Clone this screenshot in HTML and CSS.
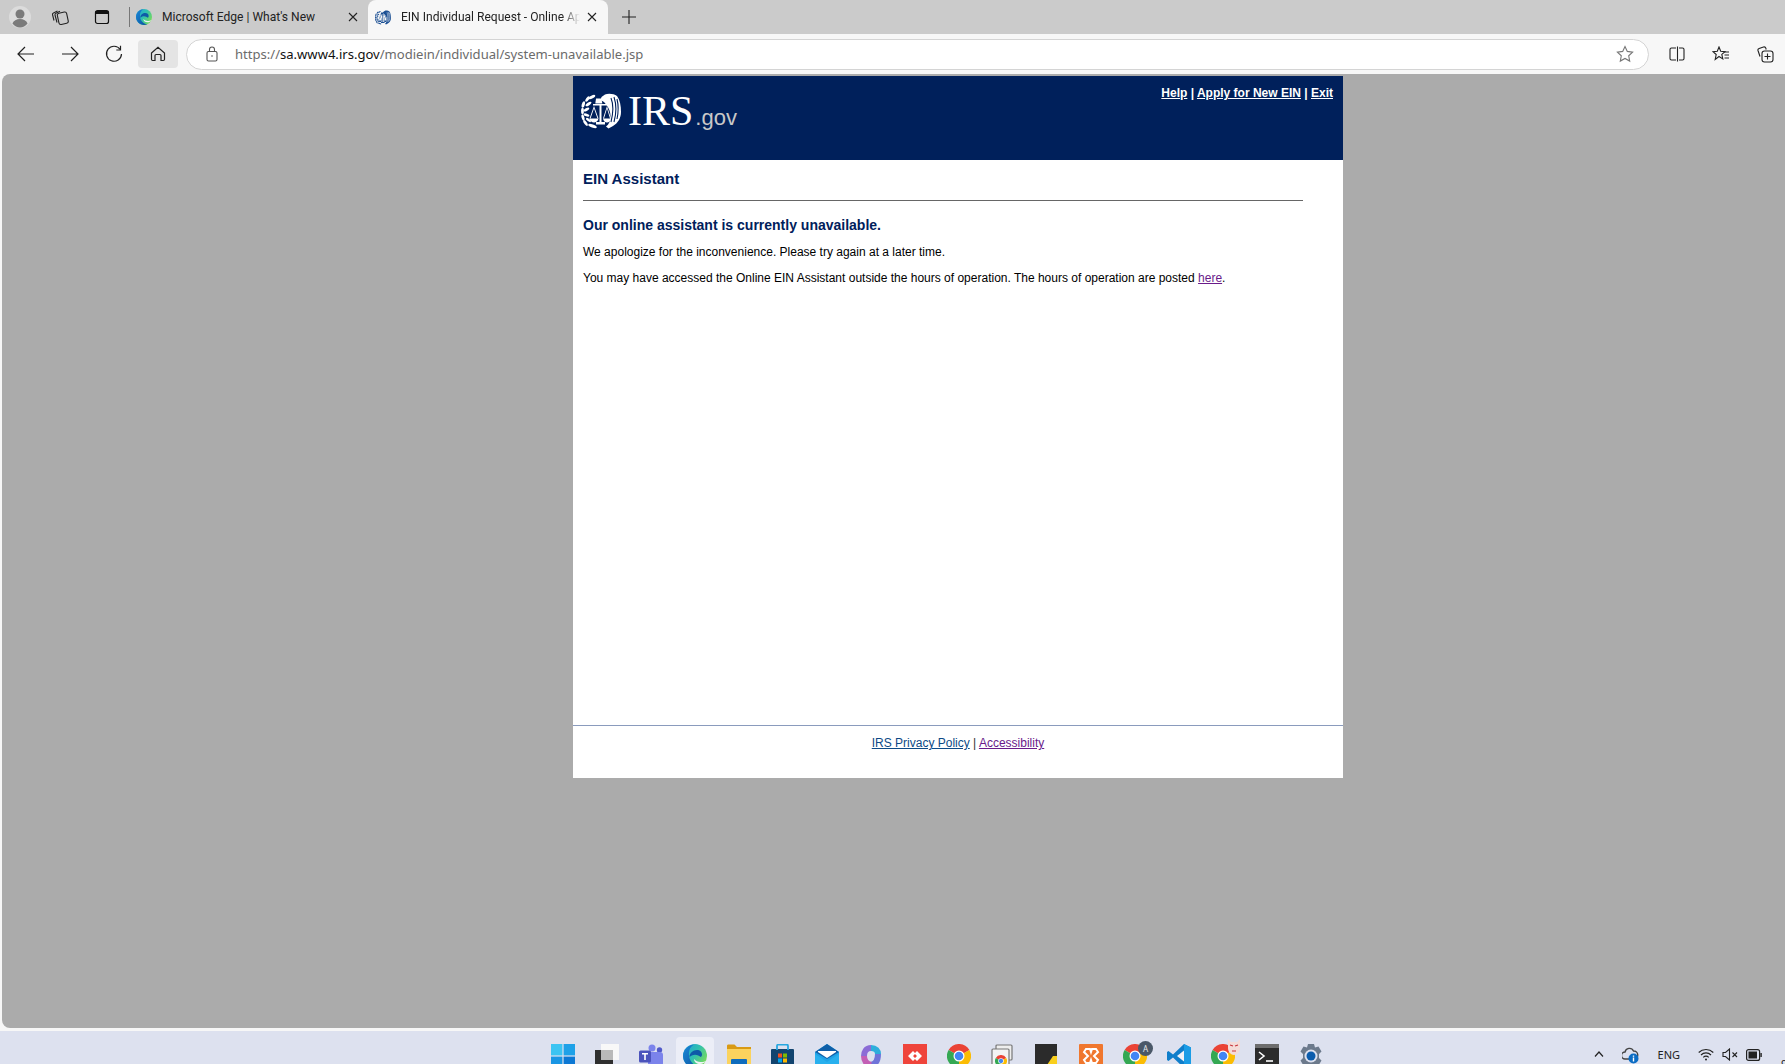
FILE: index.html
```html
<!DOCTYPE html>
<html lang="en">
<head>
<meta charset="utf-8">
<title>EIN Individual Request - Online Application</title>
<link rel="stylesheet" href="styles.css">
</head>
<body>
<svg class="defs" width="0" height="0" aria-hidden="true">
  <defs>
    <symbol id="seal" viewBox="0 0 40 36">
      <g fill="currentColor">
        <ellipse cx="11" cy="4" rx="3.600" ry="1.500" transform="rotate(-30 11 4)"/>
        <ellipse cx="6.500" cy="6" rx="1.500" ry="3.200" transform="rotate(35 6.500 6)"/>
        <ellipse cx="7.500" cy="11" rx="3.400" ry="1.400" transform="rotate(-35 7.500 11)"/>
        <ellipse cx="2.300" cy="11.500" rx="1.500" ry="3.400" transform="rotate(15 2.300 11.500)"/>
        <ellipse cx="5.500" cy="16.500" rx="3.200" ry="1.400" transform="rotate(-30 5.500 16.500)"/>
        <ellipse cx="1.500" cy="18" rx="1.400" ry="3.200"/>
        <ellipse cx="5.500" cy="22" rx="3" ry="1.400" transform="rotate(15 5.500 22)"/>
        <ellipse cx="2" cy="24.500" rx="1.400" ry="3.200" transform="rotate(-15 2 24.500)"/>
        <ellipse cx="7.500" cy="27" rx="3" ry="1.300" transform="rotate(35 7.500 27)"/>
        <ellipse cx="4.500" cy="30" rx="1.400" ry="3.400" transform="rotate(-35 4.500 30)"/>
        <ellipse cx="11.500" cy="33" rx="4.500" ry="1.500" transform="rotate(20 11.500 33)"/>
        <path d="M24 1.500C27 0 33 .5 36 3c3 4 4 10 4 16 0 6-3 11-8 14l-4.500 2.500-2.500-2c3-2 4.500-6 4.500-10.500 0-4-1.500-8-4-11l-2.500-3L19.500 7l1-3z"/>
        <path d="M12 11h15v1.400H12z"/>
        <path d="M15 5.500h5.500l.8 5h-7z"/>
        <path d="M18.500 12h2v17h3.500v2.500h-9V29h3.500z"/>
        <path d="M8.500 25.500h9c-.5 2.500-2.500 4-4.500 4s-4-1.500-4.500-4zM22 25.500h8c-.5 2.500-2 4-4 4s-3.500-1.500-4-4z"/>
        <path d="M13 13l-4.500 12.500h1L13 15.500l3.500 10h1zM26 13l-4 12.500h1l3-10 3 10h1z"/>
      </g>
      <g stroke="var(--seal-bg)" stroke-width="1.100" fill="none">
        <path d="M30 5c2 5 2.500 14 0 24M33 4c2 6 2.500 16 0 25M36 6c1.500 6 1.500 13 0 20"/>
      </g>
    </symbol>
    <linearGradient id="edgeA" x1="0" y1="0" x2="1" y2=".6">
      <stop offset="0" stop-color="#1f9fdc"/><stop offset=".55" stop-color="#2fc0b0"/><stop offset="1" stop-color="#74d95f"/>
    </linearGradient>
    <linearGradient id="edgeB" x1="0" y1="0" x2="1" y2="1">
      <stop offset="0" stop-color="#1a8ad8"/><stop offset="1" stop-color="#0b4f9e"/>
    </linearGradient>
    <symbol id="edge" viewBox="0 0 24 24">
      <circle cx="12" cy="12" r="12" fill="url(#edgeA)"/>
      <path d="M0 12C0 6 5 1 11 .5 7 2.500 5.500 7 6 11.500c.5 6 5 10.500 11 11.300-1.500.8-3.300 1.200-5 1.200C5 24 0 18 0 12z" fill="url(#edgeB)"/>
      <path d="M6.500 13C6.500 9 10 6 14 6c3 0 5 2 5 4.500 0 1-.4 2-1.200 2.600-1.500-1.300-3.300-2.400-5.800-2.400-2.300 0-4.300 1-5.500 2.300z" fill="#0e5aa8"/>
      <path d="M11 15c0 3 3 5 6 5 2.500 0 5-1.300 6.500-3.500-2 1.300-4 1.700-6 1.500-2.500-.2-5-1-6.500-3z" fill="#eef3f4"/>
    </symbol>
    <symbol id="chrome" viewBox="0 0 24 24">
      <path d="M12 12L1.600 6A12 12 0 0 1 22.400 6z" fill="#ea4335"/>
      <path d="M12 12L22.400 6A12 12 0 0 1 12 24z" fill="#fbbc04"/>
      <path d="M12 12L12 24A12 12 0 0 1 1.600 6z" fill="#34a853"/>
      <circle cx="12" cy="12" r="5.500" fill="#fff"/>
      <circle cx="12" cy="12" r="4.300" fill="#4285f4"/>
    </symbol>
  </defs>
</svg>

<header class="tabstrip">
  <div class="strip-btn strip-btn-avatar">
    <svg viewBox="0 0 22 22" width="22" height="22"><circle cx="11" cy="11" r="11" fill="#dcdcdc"/><circle cx="11" cy="8" r="4.500" fill="#7b7b7b"/><path d="M3.500 17.500c1-3 4-4.500 7.500-4.500s6.500 1.500 7.500 4.500c-2 2.500-4.700 4-7.500 4s-5.500-1.500-7.500-4z" fill="#7b7b7b"/></svg>
  </div>
  <div class="strip-btn strip-btn-collections">
    <svg viewBox="0 0 18 18" width="18" height="18" fill="none" stroke="#222" stroke-width="1.100"><path d="M3 12.500L1.500 6.500c-.2-.8.200-1.300.9-1.600L6.500 3"/><path d="M6 14.500L4 7c-.2-.8.100-1.400.9-1.700L9 3.200"/><rect x="7" y="4.500" width="9.500" height="11.500" rx="2" transform="rotate(-12 11.700 10)"/></svg>
  </div>
  <div class="strip-btn strip-btn-tabs">
    <svg viewBox="0 0 16 16" width="16" height="16" fill="none" stroke="#111" stroke-width="1.200"><rect x="1.500" y="1.500" width="13" height="13" rx="2"/><path d="M1.500 3.500h13" stroke-width="3"/></svg>
  </div>
  <span class="strip-sep"></span>
  <div class="tab">
    <svg class="tab-icon" width="16" height="16"><use href="#edge"/></svg>
    <span class="tab-title">Microsoft Edge | What's New</span>
    <svg class="tab-close" viewBox="0 0 10 10" width="10" height="10"><path d="M1 1l8 8M9 1l-8 8" stroke="#222" stroke-width="1.100"/></svg>
  </div>
  <div class="tab tab-active">
    <svg class="tab-icon favicon" width="16" height="15"><use href="#seal"/></svg>
    <span class="tab-title tab-title-fade">EIN Individual Request - Online Application</span>
    <svg class="tab-close" viewBox="0 0 10 10" width="10" height="10"><path d="M1 1l8 8M9 1l-8 8" stroke="#222" stroke-width="1.100"/></svg>
  </div>
  <svg class="new-tab" viewBox="0 0 14 14" width="14" height="14"><path d="M7 0v14M0 7h14" stroke="#222" stroke-width="1.100"/></svg>
</header>

<nav class="toolbar">
  <div class="nav-btn">
    <svg viewBox="0 0 18 16" width="18" height="16" fill="none" stroke="#222" stroke-width="1.200"><path d="M17 8H1M8 1L1 8l7 7"/></svg>
  </div>
  <div class="nav-btn">
    <svg viewBox="0 0 18 16" width="18" height="16" fill="none" stroke="#222" stroke-width="1.200"><path d="M1 8h16M10 1l7 7-7 7"/></svg>
  </div>
  <div class="nav-btn">
    <svg viewBox="0 0 18 18" width="18" height="18" fill="none" stroke="#222" stroke-width="1.200"><path d="M15.200 4.500A7.500 7.500 0 1 0 16.500 9"/><path d="M15.500 0.800v4.200h-4.200"/></svg>
  </div>
  <div class="nav-btn nav-btn-home">
    <svg viewBox="0 0 16 16" width="16" height="16" fill="none" stroke="#222" stroke-width="1.200"><path d="M1.500 7L8 1.200 14.500 7v6.300c0 .7-.5 1.200-1.200 1.200h-2.300v-5c0-.6-.4-1-1-1H6c-.6 0-1 .4-1 1v5H2.700c-.7 0-1.200-.5-1.200-1.200z"/></svg>
  </div>
  <div class="address">
    <svg class="lock" viewBox="0 0 12 16" width="12" height="16" fill="none" stroke="#555" stroke-width="1.100"><rect x="1" y="5.500" width="10" height="9.500" rx="1.500"/><path d="M3.500 5.500V3.500a2.500 2.500 0 0 1 5 0v2"/><circle cx="6" cy="10" r=".8" fill="#555" stroke="none"/></svg>
    <span class="url"><span class="url-dim">https://</span><span class="url-host">sa.www4.irs.gov</span><span class="url-dim">/modiein/individual/system-unavailable.jsp</span></span>
    <svg class="star" viewBox="0 0 18 18" width="18" height="18" fill="none" stroke="#777" stroke-width="1.100"><path d="M9 1.500l2.300 4.900 5.300.7-3.900 3.700 1 5.300L9 13.500l-4.700 2.600 1-5.300L1.400 7.100l5.300-.7z"/></svg>
  </div>
  <div class="tools">
    <div class="tool-btn">
      <svg viewBox="0 0 16 16" width="16" height="16" fill="none" stroke="#222" stroke-width="1.100"><path d="M7 2H2.500C1.700 2 1 2.700 1 3.500v9c0 .8.700 1.500 1.500 1.500H7M8.500 .5v15M10 2h3.500c.8 0 1.500.7 1.500 1.500v9c0 .8-.7 1.500-1.500 1.500H10"/></svg>
    </div>
    <div class="tool-btn">
      <svg viewBox="0 0 18 16" width="18" height="16" fill="none" stroke="#222" stroke-width="1.100"><path d="M7 1l1.700 4.200 4.300.4-3.200 2.800 1 4.500L7 10.500l-3.800 3 1-5L1 5.600l4.300-.4z"/><path d="M12 6h5M12.500 9h4.500M12.500 12h4.500"/></svg>
    </div>
    <div class="tool-btn">
      <svg viewBox="0 0 17 17" width="17" height="17" fill="none" stroke="#222" stroke-width="1.100"><path d="M3 10.500L1 4.500C.7 3.500 1.200 2.700 2.100 2.400L6.500 1c1-.3 2 .2 2.300 1.200l.4 1.300"/><rect x="5" y="5" width="11" height="11" rx="2.500"/><path d="M10.500 7.500v6M7.500 10.500h6"/></svg>
    </div>
  </div>
</nav>

<main class="viewport">
  <div class="page">
    <div class="banner">
      <div class="logo">
        <svg class="logo-seal" width="40" height="36"><use href="#seal"/></svg>
        <span class="logo-irs">IRS</span><span class="logo-gov">.gov</span>
      </div>
      <div class="banner-links"><a href="#">Help</a> | <a href="#">Apply for New EIN</a> | <a href="#">Exit</a></div>
    </div>
    <div class="content">
      <h1 class="app-title">EIN Assistant</h1>
      <hr class="title-rule">
      <h2 class="notice">Our online assistant is currently unavailable.</h2>
      <p class="body-text">We apologize for the inconvenience. Please try again at a later time.</p>
      <p class="body-text">You may have accessed the Online EIN Assistant outside the hours of operation. The hours of operation are posted <a class="visited" href="#">here</a>.</p>
    </div>
    <footer class="page-footer">
      <a class="policy" href="#">IRS Privacy Policy</a> | <a class="visited" href="#">Accessibility</a>
    </footer>
  </div>
</main>

<footer class="taskbar">
  <div class="apps">
    <div class="app"><svg viewBox="0 0 24 24" width="24" height="24"><rect width="11.400" height="11.400" fill="#3cc4f2"/><rect x="12.600" width="11.400" height="11.400" fill="#1ea1e8"/><rect y="12.600" width="11.400" height="11.400" fill="#1a96e4"/><rect x="12.600" y="12.600" width="11.400" height="11.400" fill="#0c78d4"/></svg></div>
    <div class="app"><svg viewBox="0 0 24 24" width="24" height="24"><rect x="0" y="6" width="18" height="18" fill="#2f2f2f"/><rect x="6" y="0" width="18" height="16" fill="#f8f8f8"/><rect x="6" y="6" width="12" height="10" fill="#b9b9b9"/></svg></div>
    <div class="app"><svg viewBox="0 0 24 24" width="24" height="24"><circle cx="13" cy="4" r="3.500" fill="#7b83eb"/><circle cx="20.500" cy="6" r="2.700" fill="#5059c9"/><rect x="9" y="8" width="15" height="14" rx="3" fill="#7b83eb"/><rect x="0" y="6.500" width="12" height="12" rx="1.500" fill="#4b53bc"/><path d="M3 9h6v1.500H6.800V16H5.200v-5.500H3z" fill="#fff"/></svg></div>
    <div class="app app-active"><svg width="24" height="24"><use href="#edge"/></svg></div>
    <div class="app"><svg viewBox="0 0 24 24" width="24" height="24"><path d="M0 2C0 1 .5.500 1.500.500h6L10 3h14v21H0z" fill="#d99a14"/><rect y="5" width="24" height="19" fill="#fbd35e"/><rect x="4" y="15" width="16" height="9" rx="1" fill="#0f6cbd"/></svg></div>
    <div class="app"><svg viewBox="0 0 24 24" width="24" height="24"><rect y="5" width="23" height="19" rx="1" fill="#12446f"/><path d="M6 6V2c0-1 .5-1.500 1.500-1.500h8c1 0 1.500.5 1.500 1.500v4" fill="none" stroke="#27a7e0" stroke-width="1.800"/><rect x="7" y="9.500" width="4" height="4" fill="#f25022"/><rect x="12" y="9.500" width="4" height="4" fill="#7fba00"/><rect x="7" y="14.500" width="4" height="4" fill="#00a4ef"/><rect x="12" y="14.500" width="4" height="4" fill="#ffb900"/></svg></div>
    <div class="app"><svg viewBox="0 0 24 24" width="24" height="24"><path d="M0 8L12 0l12 8v16H0z" fill="#1fa3e6"/><path d="M0 8L12 0l12 8-12 7z" fill="#0f5fa8"/><path d="M3 7h18v1l-9 6-9-6z" fill="#fff"/><path d="M0 10l12 8 12-8v14H0z" fill="#28b0ee"/></svg></div>
    <div class="app"><svg viewBox="0 0 24 24" width="24" height="24" fill="none" stroke-width="6"><path d="M12 4C7 4 5 8 5 12" stroke="#8b6cd6"/><path d="M12 4c5 0 7 3 7 6" stroke="#2eaedb"/><path d="M19 10c0 6-2 10-7 11" stroke="#6f74d9"/><path d="M5 12c0 5 3 8 7 9" stroke="#c35fb5"/></svg></div>
    <div class="app"><svg viewBox="0 0 24 24" width="24" height="24"><rect width="24" height="24" fill="#ef443b"/><path d="M10 7l-5 5 5 5 2.500-2.500L10 12l2.500-2.500z" fill="#fff"/><path d="M14 7l5 5-5 5-2.500-2.500L14 12l-2.500-2.500z" fill="#fff"/></svg></div>
    <div class="app"><svg width="24" height="24"><use href="#chrome"/></svg></div>
    <div class="app"><svg viewBox="0 0 22 24" width="22" height="24"><rect x="5" y="1" width="16" height="15" rx="1" fill="#eee" stroke="#777" stroke-width="1.200"/><rect x="1" y="5" width="17" height="19" rx="1" fill="#f4f4f4" stroke="#777" stroke-width="1.200"/><svg x="4" y="11" width="12" height="12"><use href="#chrome"/></svg></svg></div>
    <div class="app"><svg viewBox="0 0 22 24" width="22" height="24"><rect width="22" height="24" fill="#2b2b2b"/><path d="M10 24l8-12h4v12z" fill="#f9cf1c"/></svg></div>
    <div class="app"><svg viewBox="0 0 24 24" width="24" height="24"><rect width="24" height="24" rx="1" fill="#f0772e"/><path d="M7 5h4l1 3 1-3h4l2 3-4 4 4 4-2 3h-4l-1-3-1 3H7l-2-3 4-4-4-4z" fill="none" stroke="#fff" stroke-width="2"/></svg></div>
    <div class="app app-badged"><svg width="24" height="24"><use href="#chrome"/></svg><span class="badge">A</span></div>
    <div class="app"><svg viewBox="0 0 24 24" width="24" height="24"><path d="M17 0l7 3.500v17L17 24 6 13.500 1.500 17 0 16V8l1.500-1L6 10.500z" fill="#0f7ecb"/><path d="M17 6.500L10 12l7 5.500z" fill="#f0f2f8"/><path d="M17 0l7 3.500v17L17 24z" fill="#1a9ce6"/></svg></div>
    <div class="app app-badged"><svg width="24" height="24"><use href="#chrome"/></svg><svg class="fox" viewBox="0 0 14 16" width="14" height="16"><path d="M1 0l3 3h6l3-3v9c0 4-3 7-6 7s-6-3-6-7z" fill="#f4dcd8"/><path d="M3 6l3 1M11 6L8 7M5 12h4" stroke="#c9353b" stroke-width="1.200"/></svg></div>
    <div class="app"><svg viewBox="0 0 24 24" width="24" height="24"><rect width="24" height="24" rx="1" fill="#2c2c2c"/><rect width="24" height="4" fill="#6d6d6d"/><path d="M4 8l5 4-5 4" fill="none" stroke="#fff" stroke-width="1.600"/><path d="M11 17h7" stroke="#fff" stroke-width="1.600"/></svg></div>
    <div class="app"><svg viewBox="0 0 24 24" width="24" height="24"><path d="M9 0h6l1 3.500 3.500-1 3 5-2.500 2.500v4l2.500 2.500-3 5-3.500-1L15 24H9l-1-3.500-3.500 1-3-5L4 14v-4L1.500 7.500l3-5 3.500 1z" fill="#6c7a8c"/><circle cx="12" cy="12" r="6.500" fill="#dde1ef"/><circle cx="12" cy="12" r="4.500" fill="#0b5cad"/></svg></div>
  </div>
  <div class="tray">
    <svg class="tray-chev" viewBox="0 0 10 6" width="10" height="6" fill="none" stroke="#222" stroke-width="1.200"><path d="M1 5.500l4-4.500 4 4.500"/></svg>
    <svg class="tray-cloud" viewBox="0 0 17 18" width="17" height="18"><path d="M3 13a3.500 3.500 0 0 1 0-7 4.500 4.500 0 0 1 8.500-1A4 4 0 0 1 12 13z" fill="#dde1ef" stroke="#444" stroke-width="1.400"/><circle cx="11.500" cy="12.500" r="5" fill="#0b6cc4"/><rect x="10.800" y="11.500" width="1.400" height="4" fill="#fff"/><rect x="10.800" y="9.500" width="1.400" height="1.300" fill="#fff"/></svg>
    <span class="tray-lang">ENG</span>
    <svg class="tray-wifi" viewBox="0 0 16 13" width="16" height="13" fill="none" stroke="#222" stroke-width="1.100"><path d="M.7 4.500a10.500 10.500 0 0 1 14.600 0M3 7a7 7 0 0 1 10 0M5.300 9.300a3.800 3.800 0 0 1 5.400 0"/><circle cx="8" cy="11.500" r="1" fill="#222" stroke="none"/></svg>
    <svg class="tray-vol" viewBox="0 0 16 13" width="16" height="13" fill="none" stroke="#222" stroke-width="1.100"><path d="M1 4.500h2.500L7.500 1v11l-4-3.500H1z"/><path d="M10.500 4.500l4.500 4.500M15 4.500l-4.500 4.500"/></svg>
    <svg class="tray-batt" viewBox="0 0 16 12" width="16" height="12"><rect x=".6" y=".6" width="13" height="10.800" rx="2" fill="none" stroke="#222" stroke-width="1.200"/><rect x="2.500" y="2.500" width="8.500" height="7" fill="#222"/><rect x="14.400" y="4" width="1.400" height="4" fill="#222"/></svg>
    <span class="tray-clock">9</span>
  </div>
</footer>
</body>
</html>
```

FILE: styles.css
```css
* {
  box-sizing: border-box;
}

html,
body {
  height: 100%;
}

body {
  margin: 0;
  display: flex;
  flex-direction: column;
  overflow: hidden;
  background: #f7f7f7;
  font-family: "Noto Sans", "Open Sans", sans-serif;
  color: #222;
}

.defs {
  position: absolute;
}

/* tab strip */
.tabstrip {
  height: 34px;
  flex: none;
  display: flex;
  align-items: center;
  background: #cbcbcb;
}

.strip-btn {
  width: 40px;
  height: 34px;
  flex: none;
  display: flex;
  align-items: center;
  justify-content: center;
}

.strip-btn-tabs {
  width: 44px;
}

.strip-sep {
  width: 1px;
  height: 20px;
  margin-left: 5px;
  background: #777;
  flex: none;
}

.tab {
  height: 34px;
  flex: none;
  display: flex;
  align-items: center;
  width: 238px;
  padding-left: 6px;
  font-family: Roboto, "Noto Sans", sans-serif;
  font-size: 12.05px;
  color: #222;
}

.tab-icon {
  flex: none;
}

.tab-title {
  margin-left: 10px;
  flex: 1;
  min-width: 0;
  white-space: nowrap;
  overflow: hidden;
}

.tab-close {
  flex: none;
  margin: 0 10px 0 10px;
}

.tab-active {
  width: 240px;
  padding-left: 7px;
  background: #f7f7f7;
  border-radius: 8px 8px 0 0;
}

.tab-active .tab-close {
  margin: 0 11px 0 7px;
}

.tab-title-fade {
  -webkit-mask-image: linear-gradient(to right, #000 90%, transparent);
  mask-image: linear-gradient(to right, #000 90%, transparent);
}

.favicon {
  color: #1b4f93;
  --seal-bg: #f7f7f7;
}

.new-tab {
  flex: none;
  margin-left: 14px;
}

/* toolbar */
.toolbar {
  height: 40px;
  flex: none;
  display: flex;
  align-items: center;
  padding-left: 6px;
  background: #f7f7f7;
}

.nav-btn {
  width: 40px;
  height: 28px;
  margin-right: 4px;
  flex: none;
  display: flex;
  align-items: center;
  justify-content: center;
}

.nav-btn-home {
  background: #e4e4e4;
  border-radius: 4px;
  margin-right: 8px;
}

.address {
  width: 1463px;
  height: 31px;
  flex: none;
  display: flex;
  align-items: center;
  padding: 0 14px 0 19px;
  background: #fff;
  border: 1px solid #d4d4d4;
  border-radius: 16px;
}

.lock {
  flex: none;
}

.url {
  margin-left: 17px;
  flex: 1;
  font-size: 13.07px;
  white-space: nowrap;
}

.url-dim {
  color: #6b6b6b;
}

.url-host {
  color: #111;
}

.star {
  flex: none;
}

.tools {
  display: flex;
  margin-left: 6px;
  flex: none;
}

.tool-btn {
  width: 44px;
  height: 28px;
  flex: none;
  display: flex;
  align-items: center;
  justify-content: center;
}

/* web page */
.viewport {
  flex: 1;
  min-height: 0;
  margin: 0 0 3px 2px;
  padding: 2px 0 0 571px;
  background: #ababab;
  border-radius: 8px 0 0 8px;
  overflow: hidden;
}

.page {
  width: 770px;
  height: 702px;
  display: flex;
  flex-direction: column;
  background: #fff;
  font-family: "Liberation Sans", Arial, sans-serif;
  font-size: 12px;
  color: #000;
}

.banner {
  height: 84px;
  flex: none;
  display: flex;
  justify-content: space-between;
  padding: 10px 10px 0 8px;
  background: #00205b;
  --seal-bg: #00205b;
}

.logo {
  display: flex;
  align-items: flex-start;
  color: #fff;
}

.logo-seal {
  flex: none;
  margin-top: 7px;
}

.logo-irs {
  margin: 1px 0 0 7px;
  font-family: "Liberation Serif", "Times New Roman", serif;
  font-size: 42px;
  line-height: 48px;
}

.logo-gov {
  margin: 17px 0 0 2px;
  font-size: 22px;
  line-height: 30px;
  color: #c8c8c8;
}

.banner-links {
  font-weight: bold;
  line-height: 14px;
  color: #fff;
}

.banner-links a {
  color: #fff;
}

.content {
  flex: 1;
  padding: 11px 0 0 10px;
}

.app-title {
  margin: 0;
  font-size: 15px;
  line-height: 16px;
  font-weight: bold;
  color: #00205b;
}

.title-rule {
  width: 720px;
  height: 1px;
  margin: 13px 0 0;
  border: 0;
  background: #666;
}

.notice {
  margin: 16px 0 0;
  font-size: 14px;
  line-height: 16px;
  font-weight: bold;
  color: #00205b;
}

.body-text {
  margin: 12px 0 0;
  line-height: 14px;
}

.visited {
  color: #6a1b8a;
}

.policy {
  color: #0d4a86;
}

.page-footer {
  height: 53px;
  flex: none;
  padding-top: 10px;
  border-top: 1px solid #8a9bbd;
  text-align: center;
  line-height: 14px;
  color: #333;
}

/* taskbar */
.taskbar {
  height: 33px;
  flex: none;
  display: flex;
  background: #dde1ef;
  overflow: hidden;
}

.apps {
  display: flex;
  padding: 13px 0 0 551px;
  height: 60px;
}

.app {
  position: relative;
  width: 24px;
  height: 24px;
  margin-right: 20px;
  flex: none;
}

.app svg {
  display: block;
}

.app-active::before {
  content: "";
  position: absolute;
  inset: -7px;
  background: #eceef7;
  border-radius: 4px;
}

.app-active svg {
  position: relative;
}

.badge {
  position: absolute;
  top: -3px;
  right: -6px;
  width: 15px;
  height: 15px;
  border-radius: 50%;
  background: #4a5868;
  color: #e8e8e8;
  font-size: 8px;
  line-height: 15px;
  text-align: center;
}

.fox {
  position: absolute;
  top: -5px;
  right: -6px;
}

.tray {
  margin-left: auto;
  display: flex;
  align-items: flex-start;
  padding-top: 14px;
  height: 60px;
}

.tray-chev {
  margin-top: 6px;
}

.tray-cloud {
  margin: 1px 0 0 18px;
}

.tray-lang {
  margin: 2px 0 0 19px;
  font-size: 11px;
  line-height: 15px;
  color: #222;
}

.tray-wifi {
  margin: 3px 0 0 18px;
}

.tray-vol {
  margin: 3px 0 0 8px;
}

.tray-batt {
  margin: 4px 0 0 8px;
}

.tray-clock {
  margin: 11px 0 0 19px;
  width: 4px;
  overflow: hidden;
  font-size: 11px;
  line-height: 15px;
}
```
